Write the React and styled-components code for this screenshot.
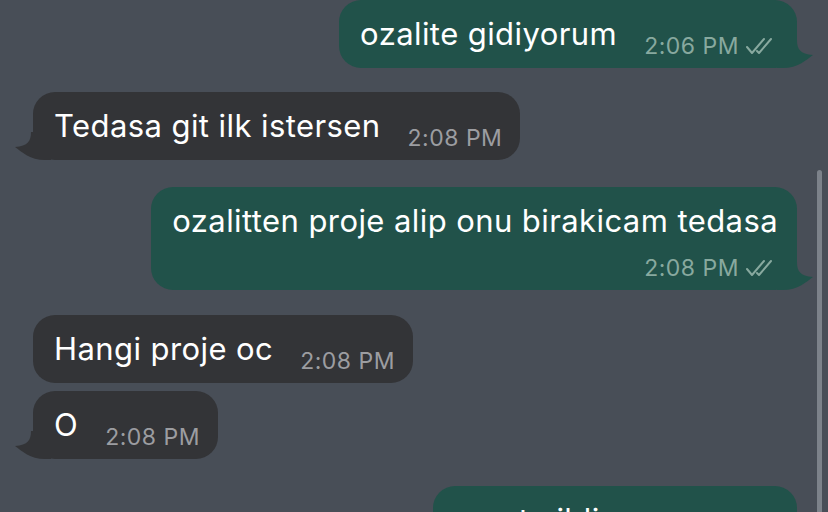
import React from "react";
import styled, { createGlobalStyle } from "styled-components";

const GlobalStyle = createGlobalStyle`
  html, body {
    margin: 0;
    padding: 0;
    background: #484e57;
  }
  body {
    font-family: Inter, "Noto Sans", "Liberation Sans", sans-serif;
    -webkit-font-smoothing: antialiased;
  }
`;

const messages = [
  { id: 1, out: true, text: "ozalite gidiyorum", time: "2:06 PM", gap: 0, tail: true },
  { id: 2, out: false, text: "Tedasa git ilk istersen", time: "2:08 PM", gap: 24, tail: true },
  { id: 3, out: true, text: "ozalitten proje alip onu birakicam tedasa", time: "2:08 PM", gap: 27, tail: true, stacked: true },
  { id: 4, out: false, text: "Hangi proje oc", time: "2:08 PM", gap: 25 },
  { id: 5, out: false, text: "O", time: "2:08 PM", gap: 8, tail: true },
  { id: 6, out: true, text: "rasat yildiz", time: "2:09 PM", gap: 27, tail: true },
];

const Screen = styled.div`
  position: relative;
  width: 828px;
  height: 512px;
  overflow: hidden;
  background: #484e57;
`;

const List = styled.div`
  display: flex;
  flex-direction: column;
`;

const Row = styled.div`
  display: flex;
  justify-content: ${(p) => (p.$out ? "flex-end" : "flex-start")};
  padding: ${(p) => (p.$out ? "0 31px 0 0" : "0 0 0 33px")};
  margin-top: ${(p) => p.$gap}px;
`;

const Bubble = styled.div`
  position: relative;
  display: flex;
  flex-direction: ${(p) => (p.$stacked ? "column" : "row")};
  align-items: flex-end;
  padding: ${(p) => (p.$out ? "10px 19px 10px 21px" : "10px 18px 10px 21px")};
  border-radius: 22px;
  background: ${(p) => (p.$out ? "#21524a" : "#333437")};
  color: #ffffff;
`;

const Text = styled.span`
  font-size: 31px;
  line-height: 48px;
  letter-spacing: 0.42px;
  white-space: nowrap;
  align-self: ${(p) => (p.$stacked ? "flex-start" : "auto")};
`;

const Meta = styled.span`
  display: flex;
  align-items: center;
  gap: 5px;
  margin-left: ${(p) => (p.$stacked ? "0" : "27px")};
  margin-top: ${(p) => (p.$stacked ? "11px" : "0")};
  font-size: 23px;
  line-height: 24px;
  letter-spacing: 0.5px;
  color: ${(p) => (p.$out ? "#88a99f" : "#9c9da1")};
  white-space: nowrap;
`;

const Tail = styled.svg`
  position: absolute;
  bottom: 0;
  width: 36px;
  height: 28px;
  ${(p) => (p.$out ? "right: -16px;" : "left: -18px; transform: scaleX(-1);")}
  fill: ${(p) => (p.$out ? "#21524a" : "#333437")};
`;

const Scrollbar = styled.div`
  position: absolute;
  right: 6px;
  top: 170px;
  bottom: -10px;
  width: 5px;
  border-radius: 3px;
  background: #7c828a;
`;

function Ticks() {
  return (
    <svg width="34" height="20" viewBox="0 0 34 20" fill="none" stroke="#88a99f" strokeWidth="2" strokeLinecap="round" strokeLinejoin="round">
      <path d="M3 11 L8 17 L20 3" />
      <path d="M13 15 L15 17 L27 3" />
    </svg>
  );
}

function Message({ m }) {
  return (
    <Row $out={m.out} $gap={m.gap}>
      <Bubble $out={m.out} $stacked={m.stacked}>
        <Text $stacked={m.stacked}>{m.text}</Text>
        <Meta $out={m.out} $stacked={m.stacked}>
          {m.time}
          {m.out && <Ticks />}
        </Meta>
        {m.tail && (
          <Tail $out={m.out} viewBox="0 0 36 28">
            <path d="M0 0 H20 C20 9 23 14 36 15 C29 20 21 28 6 28 H0 Z" />
          </Tail>
        )}
      </Bubble>
    </Row>
  );
}

export default function App() {
  return (
    <Screen>
      <GlobalStyle />
      <List>
        {messages.map((m) => (
          <Message key={m.id} m={m} />
        ))}
      </List>
      <Scrollbar />
    </Screen>
  );
}
